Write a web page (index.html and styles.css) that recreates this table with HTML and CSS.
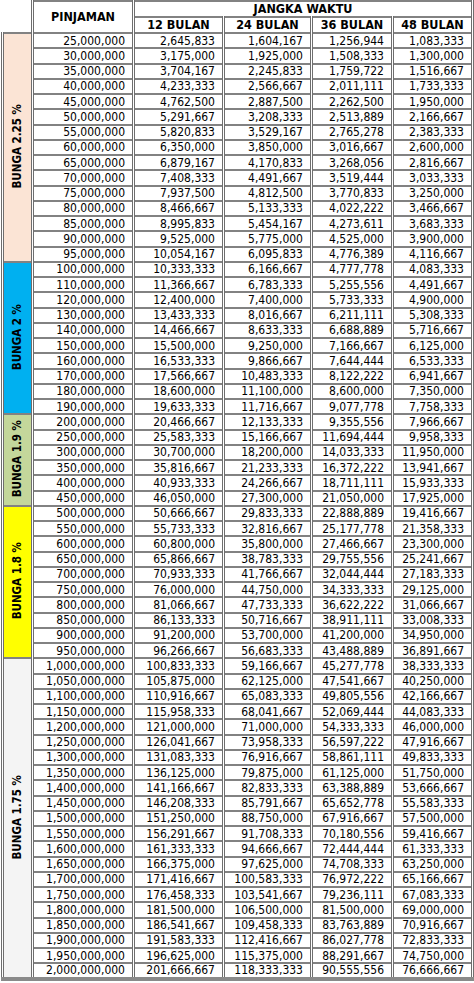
FILE: index.html
```html
<!DOCTYPE html>
<html>
<head>
<meta charset="utf-8">
<link rel="stylesheet" href="styles.css">
</head>
<body>
<table class="tbl">
<colgroup><col class="c-lbl"><col class="c-pin"><col class="c-12"><col class="c-24"><col class="c-36"><col class="c-48"></colgroup>
<thead>
<tr class="h1"><th class="corner" rowspan="2"></th><th class="hd" rowspan="2">PINJAMAN</th><th class="hd" colspan="4">JANGKA WAKTU</th></tr>
<tr class="h2"><th class="hd">12 BULAN</th><th class="hd">24 BULAN</th><th class="hd">36 BULAN</th><th class="hd">48 BULAN</th></tr>
</thead>
<tbody>
<tr><td class="lbl peach" rowspan="15"><span class="vt">BUNGA 2.25 %</span></td><td>25,000,000</td><td>2,645,833</td><td>1,604,167</td><td>1,256,944</td><td>1,083,333</td></tr>
<tr><td>30,000,000</td><td>3,175,000</td><td>1,925,000</td><td>1,508,333</td><td>1,300,000</td></tr>
<tr><td>35,000,000</td><td>3,704,167</td><td>2,245,833</td><td>1,759,722</td><td>1,516,667</td></tr>
<tr><td>40,000,000</td><td>4,233,333</td><td>2,566,667</td><td>2,011,111</td><td>1,733,333</td></tr>
<tr><td>45,000,000</td><td>4,762,500</td><td>2,887,500</td><td>2,262,500</td><td>1,950,000</td></tr>
<tr><td>50,000,000</td><td>5,291,667</td><td>3,208,333</td><td>2,513,889</td><td>2,166,667</td></tr>
<tr><td>55,000,000</td><td>5,820,833</td><td>3,529,167</td><td>2,765,278</td><td>2,383,333</td></tr>
<tr><td>60,000,000</td><td>6,350,000</td><td>3,850,000</td><td>3,016,667</td><td>2,600,000</td></tr>
<tr><td>65,000,000</td><td>6,879,167</td><td>4,170,833</td><td>3,268,056</td><td>2,816,667</td></tr>
<tr><td>70,000,000</td><td>7,408,333</td><td>4,491,667</td><td>3,519,444</td><td>3,033,333</td></tr>
<tr><td>75,000,000</td><td>7,937,500</td><td>4,812,500</td><td>3,770,833</td><td>3,250,000</td></tr>
<tr><td>80,000,000</td><td>8,466,667</td><td>5,133,333</td><td>4,022,222</td><td>3,466,667</td></tr>
<tr><td>85,000,000</td><td>8,995,833</td><td>5,454,167</td><td>4,273,611</td><td>3,683,333</td></tr>
<tr><td>90,000,000</td><td>9,525,000</td><td>5,775,000</td><td>4,525,000</td><td>3,900,000</td></tr>
<tr><td>95,000,000</td><td>10,054,167</td><td>6,095,833</td><td>4,776,389</td><td>4,116,667</td></tr>
<tr><td class="lbl blue" rowspan="10"><span class="vt">BUNGA 2 %</span></td><td>100,000,000</td><td>10,333,333</td><td>6,166,667</td><td>4,777,778</td><td>4,083,333</td></tr>
<tr><td>110,000,000</td><td>11,366,667</td><td>6,783,333</td><td>5,255,556</td><td>4,491,667</td></tr>
<tr><td>120,000,000</td><td>12,400,000</td><td>7,400,000</td><td>5,733,333</td><td>4,900,000</td></tr>
<tr><td>130,000,000</td><td>13,433,333</td><td>8,016,667</td><td>6,211,111</td><td>5,308,333</td></tr>
<tr><td>140,000,000</td><td>14,466,667</td><td>8,633,333</td><td>6,688,889</td><td>5,716,667</td></tr>
<tr><td>150,000,000</td><td>15,500,000</td><td>9,250,000</td><td>7,166,667</td><td>6,125,000</td></tr>
<tr><td>160,000,000</td><td>16,533,333</td><td>9,866,667</td><td>7,644,444</td><td>6,533,333</td></tr>
<tr><td>170,000,000</td><td>17,566,667</td><td>10,483,333</td><td>8,122,222</td><td>6,941,667</td></tr>
<tr><td>180,000,000</td><td>18,600,000</td><td>11,100,000</td><td>8,600,000</td><td>7,350,000</td></tr>
<tr><td>190,000,000</td><td>19,633,333</td><td>11,716,667</td><td>9,077,778</td><td>7,758,333</td></tr>
<tr><td class="lbl green" rowspan="6"><span class="vt">BUNGA 1.9 %</span></td><td>200,000,000</td><td>20,466,667</td><td>12,133,333</td><td>9,355,556</td><td>7,966,667</td></tr>
<tr><td>250,000,000</td><td>25,583,333</td><td>15,166,667</td><td>11,694,444</td><td>9,958,333</td></tr>
<tr><td>300,000,000</td><td>30,700,000</td><td>18,200,000</td><td>14,033,333</td><td>11,950,000</td></tr>
<tr><td>350,000,000</td><td>35,816,667</td><td>21,233,333</td><td>16,372,222</td><td>13,941,667</td></tr>
<tr><td>400,000,000</td><td>40,933,333</td><td>24,266,667</td><td>18,711,111</td><td>15,933,333</td></tr>
<tr><td>450,000,000</td><td>46,050,000</td><td>27,300,000</td><td>21,050,000</td><td>17,925,000</td></tr>
<tr><td class="lbl yellow" rowspan="10"><span class="vt">BUNGA 1.8 %</span></td><td>500,000,000</td><td>50,666,667</td><td>29,833,333</td><td>22,888,889</td><td>19,416,667</td></tr>
<tr><td>550,000,000</td><td>55,733,333</td><td>32,816,667</td><td>25,177,778</td><td>21,358,333</td></tr>
<tr><td>600,000,000</td><td>60,800,000</td><td>35,800,000</td><td>27,466,667</td><td>23,300,000</td></tr>
<tr><td>650,000,000</td><td>65,866,667</td><td>38,783,333</td><td>29,755,556</td><td>25,241,667</td></tr>
<tr><td>700,000,000</td><td>70,933,333</td><td>41,766,667</td><td>32,044,444</td><td>27,183,333</td></tr>
<tr><td>750,000,000</td><td>76,000,000</td><td>44,750,000</td><td>34,333,333</td><td>29,125,000</td></tr>
<tr><td>800,000,000</td><td>81,066,667</td><td>47,733,333</td><td>36,622,222</td><td>31,066,667</td></tr>
<tr><td>850,000,000</td><td>86,133,333</td><td>50,716,667</td><td>38,911,111</td><td>33,008,333</td></tr>
<tr><td>900,000,000</td><td>91,200,000</td><td>53,700,000</td><td>41,200,000</td><td>34,950,000</td></tr>
<tr><td>950,000,000</td><td>96,266,667</td><td>56,683,333</td><td>43,488,889</td><td>36,891,667</td></tr>
<tr><td class="lbl grey" rowspan="21"><span class="vt">BUNGA 1.75 %</span></td><td>1,000,000,000</td><td>100,833,333</td><td>59,166,667</td><td>45,277,778</td><td>38,333,333</td></tr>
<tr><td>1,050,000,000</td><td>105,875,000</td><td>62,125,000</td><td>47,541,667</td><td>40,250,000</td></tr>
<tr><td>1,100,000,000</td><td>110,916,667</td><td>65,083,333</td><td>49,805,556</td><td>42,166,667</td></tr>
<tr><td>1,150,000,000</td><td>115,958,333</td><td>68,041,667</td><td>52,069,444</td><td>44,083,333</td></tr>
<tr><td>1,200,000,000</td><td>121,000,000</td><td>71,000,000</td><td>54,333,333</td><td>46,000,000</td></tr>
<tr><td>1,250,000,000</td><td>126,041,667</td><td>73,958,333</td><td>56,597,222</td><td>47,916,667</td></tr>
<tr><td>1,300,000,000</td><td>131,083,333</td><td>76,916,667</td><td>58,861,111</td><td>49,833,333</td></tr>
<tr><td>1,350,000,000</td><td>136,125,000</td><td>79,875,000</td><td>61,125,000</td><td>51,750,000</td></tr>
<tr><td>1,400,000,000</td><td>141,166,667</td><td>82,833,333</td><td>63,388,889</td><td>53,666,667</td></tr>
<tr><td>1,450,000,000</td><td>146,208,333</td><td>85,791,667</td><td>65,652,778</td><td>55,583,333</td></tr>
<tr><td>1,500,000,000</td><td>151,250,000</td><td>88,750,000</td><td>67,916,667</td><td>57,500,000</td></tr>
<tr><td>1,550,000,000</td><td>156,291,667</td><td>91,708,333</td><td>70,180,556</td><td>59,416,667</td></tr>
<tr><td>1,600,000,000</td><td>161,333,333</td><td>94,666,667</td><td>72,444,444</td><td>61,333,333</td></tr>
<tr><td>1,650,000,000</td><td>166,375,000</td><td>97,625,000</td><td>74,708,333</td><td>63,250,000</td></tr>
<tr><td>1,700,000,000</td><td>171,416,667</td><td>100,583,333</td><td>76,972,222</td><td>65,166,667</td></tr>
<tr><td>1,750,000,000</td><td>176,458,333</td><td>103,541,667</td><td>79,236,111</td><td>67,083,333</td></tr>
<tr><td>1,800,000,000</td><td>181,500,000</td><td>106,500,000</td><td>81,500,000</td><td>69,000,000</td></tr>
<tr><td>1,850,000,000</td><td>186,541,667</td><td>109,458,333</td><td>83,763,889</td><td>70,916,667</td></tr>
<tr><td>1,900,000,000</td><td>191,583,333</td><td>112,416,667</td><td>86,027,778</td><td>72,833,333</td></tr>
<tr><td>1,950,000,000</td><td>196,625,000</td><td>115,375,000</td><td>88,291,667</td><td>74,750,000</td></tr>
<tr class="last"><td>2,000,000,000</td><td>201,666,667</td><td>118,333,333</td><td>90,555,556</td><td>76,666,667</td></tr>
</tbody>
</table>
</body>
</html>
```

FILE: styles.css
```css
html, body {
  margin: 0;
  padding: 0;
  background: #ffffff;
}

.tbl {
  border-collapse: collapse;
  table-layout: fixed;
  width: 471px;
  margin-left: 1px;
  font-family: "DejaVu Sans Condensed", "DejaVu Sans", Verdana, sans-serif;
  font-stretch: condensed;
  color: #000000;
}

.c-lbl { width: 30px; }
.c-pin { width: 101px; }
.c-12 { width: 90px; }
.c-24 { width: 88px; }
.c-36 { width: 81px; }
.c-48 { width: 80px; }

.tbl th,
.tbl td {
  padding: 0;
  border-top: 2px solid #828282;
  border-bottom: 2px solid #828282;
  border-left: 3px double #6e6e6e;
  border-right: 3px double #6e6e6e;
  overflow: hidden;
  white-space: nowrap;
}

.h1, .h2 { height: 16px; }

.hd {
  font-size: 12.5px;
  font-weight: bold;
  line-height: 1;
  text-align: center;
  vertical-align: middle;
  color: #000000;
  background: #ffffff;
}

.tbl th.corner {
  border: none;
  background: #ffffff;
}

.tbl tbody tr { height: 15.26px; }

.tbl tbody td {
  font-size: 12px;
  line-height: 1;
  text-align: right;
  padding-right: 7px;
  vertical-align: middle;
  background: #ffffff;
}

.tbl tr.last td { border-bottom: 4px solid #8a8a8a; }

.tbl td.lbl {
  padding: 0;
  text-align: center;
  vertical-align: middle;
}

.tbl td.lbl.grey { border-bottom: 4px solid #8a8a8a; }

.vt {
  display: inline-block;
  writing-mode: vertical-rl;
  transform: rotate(180deg);
  font-size: 11.5px;
  font-weight: bold;
  color: #000000;
  line-height: 1;
}

.peach { background: #fbe4d5 !important; }
.blue { background: #00b0f0 !important; }
.green { background: #c4d79b !important; }
.yellow { background: #ffff00 !important; }
.grey { background: #f4f4f4 !important; }
```
